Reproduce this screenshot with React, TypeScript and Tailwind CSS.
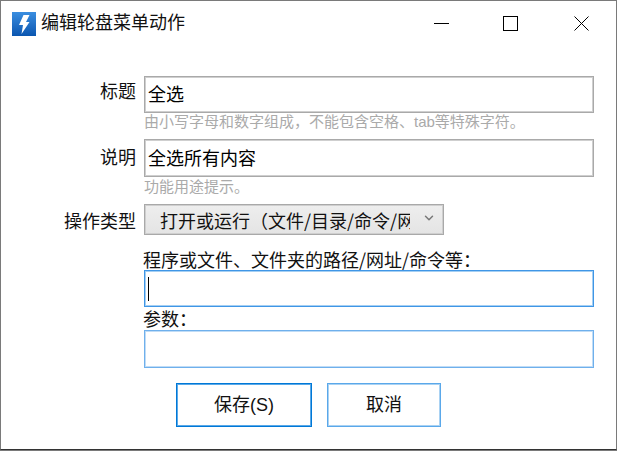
import { ChevronDown } from 'lucide-react';

const font = { fontFamily: '"Liberation Sans", "Noto Sans CJK SC", sans-serif' };

function Label({ text, className }: { text: string; className: string }) {
  return <div className={`w-[128px] mr-[8px] shrink-0 text-right text-[18px] leading-[24px] text-[#111] ${className}`}>{text}</div>;
}

export default function App() {
  return (
    <div className="w-[617px] h-[451px] overflow-hidden bg-[#7a7a7a]" style={font}>
      <div className="w-full h-[450px] overflow-hidden bg-white border border-[#7a7a7a] border-b-[#333] flex flex-col">
        {/* 标题栏 */}
        <div className="h-[45px] flex items-center shrink-0">
          <div className="ml-[11px] w-[24px] h-[24px] bg-gradient-to-b from-[#3a8ee0] to-[#0a56b0] flex items-center justify-center">
            <svg viewBox="0 0 24 24" className="w-[24px] h-[24px]">
              <path d="M11.5 3 L17.5 3 L14 10 L17.5 10 L9.5 22 L11 13 L7 13 Z" fill="#fff" />
            </svg>
          </div>
          <div className="ml-[5px] text-[18px] leading-[24px] text-[#111] -mt-[1px]">编辑轮盘菜单动作</div>
          <div className="ml-auto flex items-center h-full -mt-[1px]">
            <div className="w-[15px] h-px bg-black mr-[54px]" />
            <div className="w-[15px] h-[15px] border border-black mr-[56px]" />
            <svg viewBox="0 0 15 15" className="w-[15px] h-[15px] mr-[27px]">
              <path d="M0.5 0.5 L14.5 14.5 M14.5 0.5 L0.5 14.5" stroke="#000" strokeWidth="1" fill="none" />
            </svg>
          </div>
        </div>

        <div className="flex flex-col pl-[7px] pt-[30px]">
          <div className="flex items-start">
            <Label text="标题" className="pt-[4px]" />
            <div className="w-[450px]">
              <div className="h-[37px] border border-[#a9a9a9] shadow-[inset_0_0_0_1px_#cfcfcf] pl-[3px] pt-[2px] flex items-center text-[18px] text-black">全选</div>
              <div className="h-[26px] text-[15px] leading-[18px] text-[#aaa]">由小写字母和数字组成，不能包含空格、tab等特殊字符。</div>
            </div>
          </div>
          <div className="flex items-start">
            <Label text="说明" className="pt-[7px]" />
            <div className="w-[450px]">
              <div className="h-[38px] border border-[#a9a9a9] shadow-[inset_0_0_0_1px_#cfcfcf] pl-[3px] pt-[2px] flex items-center text-[18px] text-black">全选所有内容</div>
              <div className="h-[27px] text-[15px] leading-[19px] text-[#aaa]">功能用途提示。</div>
            </div>
          </div>
          <div className="flex items-center h-[31px]">
            <Label text="操作类型" className="pt-[4px]" />
            <div className="w-[300px] h-[31px] bg-gradient-to-b from-[#eeeeee] to-[#e4e4e4] border border-[#a9a9a9] shadow-[inset_0_0_0_1px_#cfcfcf] flex items-center relative">
              <div className="ml-[15px] w-[250px] overflow-hidden whitespace-nowrap text-[18px] text-[#111] pt-[1px] font-['Noto_Sans_CJK_SC']">打开或运行（文件/目录/命令/网址）</div>
              <ChevronDown className="absolute right-[7px] top-[6px] w-[14px] h-[14px] text-[#777]" strokeWidth={2.5} />
            </div>
          </div>
          <div className="flex flex-col ml-[136px] w-[450px] mt-[13px]">
            <div className="h-[22px] text-[18px] leading-[22px] text-[#111] -ml-[1px] whitespace-nowrap font-['Noto_Sans_CJK_SC']">程序或文件、文件夹的路径/网址/命令等：</div>
            <div className="h-[37px] border border-[#3f96e6] shadow-[inset_0_0_0_1px_#a5cff3] flex items-center pl-[3px]">
              <div className="w-px h-[24px] bg-black" />
            </div>
            <div className="h-[20px] mt-[3px] text-[18px] leading-[20px] text-[#111] -ml-[1px]">参数：</div>
            <div className="h-[38px] border border-[#6fb0ec] shadow-[inset_0_0_0_1px_#c0dcf6]" />
          </div>
          <div className="flex ml-[168px] mt-[15px] gap-[15px]">
            <div className="w-[136px] h-[44px] border border-[#0078d7] shadow-[inset_0_0_0_1px_#5aa9e8] flex items-center justify-center text-[18px] text-[#111]">保存(S)</div>
            <div className="w-[114px] h-[44px] border border-[#5aa8ea] shadow-[inset_0_0_0_1px_#a9d2f3] flex items-center justify-center text-[18px] text-[#111]">取消</div>
          </div>
        </div>
      </div>
    </div>
  );
}
